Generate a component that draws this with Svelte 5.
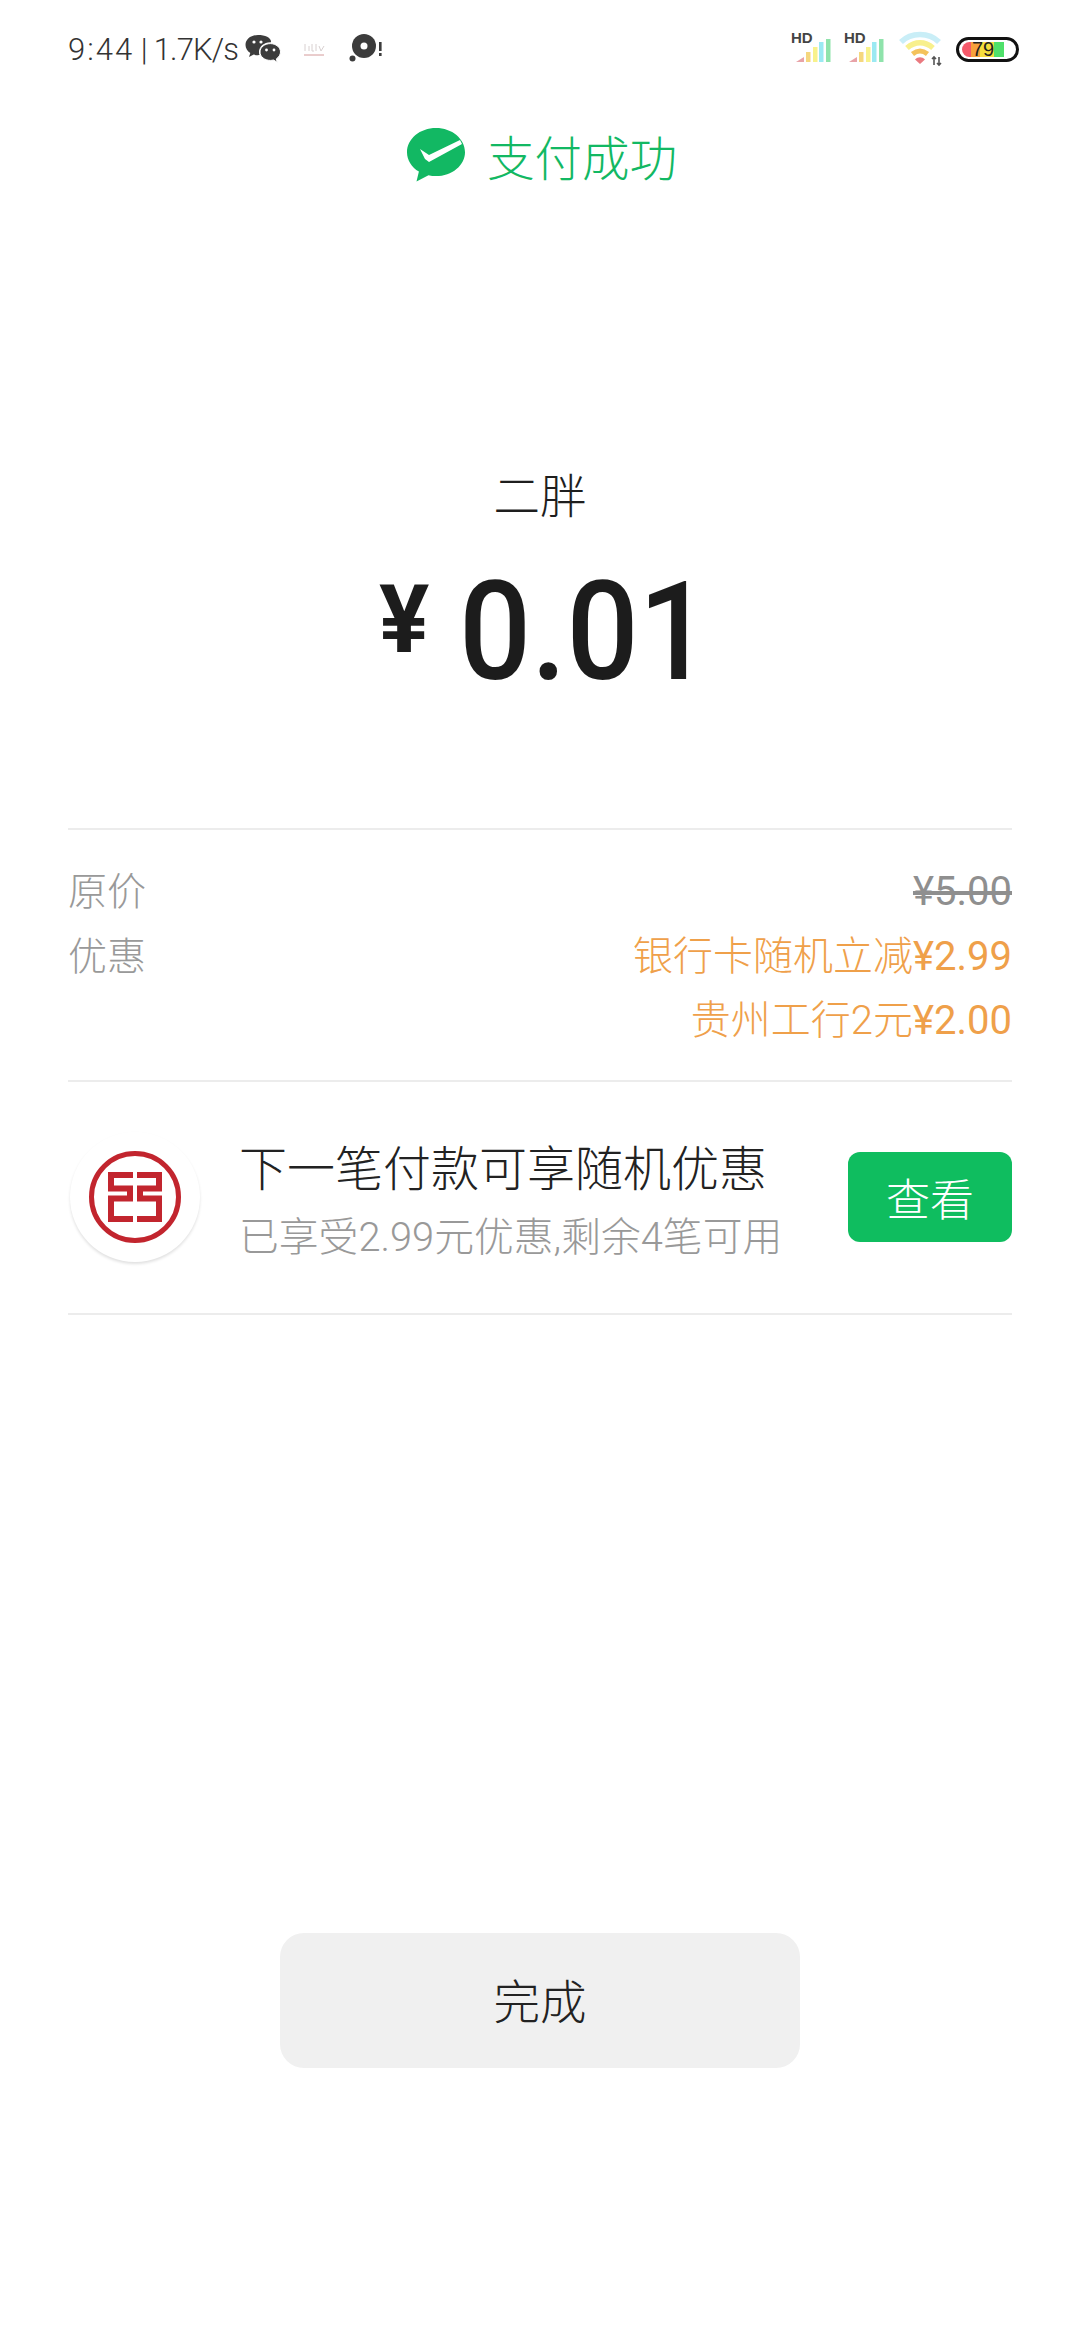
<script>
  const originalPrice = '¥5.00';
  const discounts = [
    { label: '银行卡随机立减', amount: '¥2.99' },
    { label: '贵州工行2元', amount: '¥2.00' }
  ];
  const signalBars = [
    { x: 13, h: 10, color: '#f5d77e' },
    { x: 20, h: 15, color: '#f8f28c' },
    { x: 26, h: 20, color: '#9be9f2' },
    { x: 33, h: 23, color: '#8fe3ab' }
  ];
</script>

<div class="page">
  <div class="status">
    <span class="clock"><span class="time">9:44</span> | 1.7K/s</span>
    <svg class="wechat" width="36" height="30" viewBox="0 0 36 30">
      <path d="M13 1C6 1 .5 5.400 .5 11c0 3.300 1.900 6.100 4.800 8l-1.300 4 4.700-2.400c1.400.4 2.800.6 4.300.6.500 0 1 0 1.500-.1-.4-1-.5-2-.5-3.100 0-5.400 5.100-9.700 11.200-9.700h.8C26.700 3.900 20.500 1 13 1z" fill="#3c3c3c"/>
      <path d="M35.500 18c0-4.700-4.600-8.400-10.200-8.400S15 13.300 15 18s4.600 8.400 10.300 8.400c1.100 0 2.200-.2 3.200-.4l3.800 2.300-1-3.400c2.500-1.700 4.200-4.300 4.200-6.900z" fill="#3c3c3c" stroke="#fff" stroke-width="1"/>
      <circle cx="9" cy="8" r="1.600" fill="#fff"/><circle cx="16" cy="8" r="1.600" fill="#fff"/>
      <circle cx="21.500" cy="16" r="1.400" fill="#fff"/><circle cx="29" cy="16" r="1.400" fill="#fff"/>
    </svg>
    <svg class="tiny" width="22" height="16" viewBox="0 0 22 16">
      <path d="M2 3v7M6 5v5M9 3v7h2M13 3v7M16 5l2 5 3-5" stroke="#d8d0d0" stroke-width="1" fill="none"/>
      <path d="M1 14h20" stroke="#d49a9a" stroke-width="1"/>
    </svg>
    <svg class="disc" width="34" height="30" viewBox="0 0 34 30">
      <circle cx="15" cy="12" r="12" fill="#3c3c3c"/>
      <circle cx="15" cy="12" r="3.500" fill="#fff"/>
      <circle cx="3.500" cy="24.500" r="3" fill="#3c3c3c"/>
      <rect x="30" y="8" width="2.600" height="9" fill="#3c3c3c"/>
      <rect x="30" y="19" width="2.600" height="3" fill="#3c3c3c"/>
    </svg>
    <span class="spacer"></span>
    <div class="sys">
      {#each [0, 1] as sim}
        <div class="sim" data-sim={sim}>
          <span class="hd">HD</span>
          <svg width="40" height="24" viewBox="0 0 40 24">
            <path d="M3 24l8-5v5z" fill="#e8a3a8"/>
            {#each signalBars as b}
              <rect x={b.x} y={24 - b.h} width="4.500" height={b.h} fill={b.color}/>
            {/each}
          </svg>
        </div>
      {/each}
      <svg class="wifi" width="44" height="36" viewBox="0 0 44 36">
        <path d="M2 11C12 1 30 1 40 11" fill="none" stroke="#c9eef7" stroke-width="5.500"/>
        <path d="M8 17c8-7 18-7 26 0" fill="none" stroke="#f8f08c" stroke-width="5.500"/>
        <path d="M13.500 23c5-4 10-4 15 0" fill="none" stroke="#f4c25c" stroke-width="5"/>
        <path d="M16 28.500c3-3 7-3 10 0l-5 4.500z" fill="#ea7a80"/>
        <path d="M35 26v8M33 28l2-2 2 2M40 26v8M38 32l2 2 2-2" stroke="#555" stroke-width="1.600" fill="none"/>
      </svg>
      <div class="battery">
        <div class="charge"><span class="level">79</span></div>
      </div>
    </div>
  </div>

  <div class="result">
    <svg width="58" height="54" viewBox="0 0 58 54">
      <path d="M29 0C13 0 0 10.800 0 24.200c0 8 4.700 15 11.900 19.400L9.500 53.500l12-6.300c2.400.6 4.900.9 7.500.9 16 0 29-10.800 29-23.900C58 10.800 45 0 29 0z" fill="#12b863"/>
      <path d="M13 21l9 6 31-15 2 4-33 18-4-3z" fill="#fff"/>
    </svg>
    <span>支付成功</span>
  </div>

  <div class="payee">二胖</div>
  <div class="amount"><span class="yen">¥</span><span class="num">0.01</span></div>

  <div class="details">
    <div class="line">
      <span class="key">原价</span>
      <s class="old">{originalPrice}</s>
    </div>
    <div class="line">
      <span class="key">优惠</span>
      <div class="offers">
        {#each discounts as d}
          <div class="offer">{d.label}<b>{d.amount}</b></div>
        {/each}
      </div>
    </div>
  </div>

  <div class="promo">
    <div class="logo">
      <svg width="94" height="94" viewBox="0 0 94 94">
        <circle cx="47" cy="47" r="43.500" fill="none" stroke="#c2252e" stroke-width="5"/>
        <g fill="none" stroke="#c2252e" stroke-width="6" transform="translate(20 22)">
          <path d="M25 3H3V16.500H22V26.500H3V47H25"/>
          <path d="M29 3H51V16.500H32V26.500H51V47H29"/>
        </g>
      </svg>
    </div>
    <div class="copy">
      <div class="title">下一笔付款可享随机优惠</div>
      <div class="sub">已享受2.99元优惠,剩余4笔可用</div>
    </div>
    <button class="view">查看</button>
  </div>

  <button class="done">完成</button>
</div>

<style>
  :global(body) {
    background: #fff;
    font-family: "Roboto", "Noto Sans CJK SC", sans-serif;
    font-weight: 300;
  }
  .page {
    height: 2340px;
    box-sizing: border-box;
    padding: 0 68px;
    display: flex;
    flex-direction: column;
    overflow: hidden;
  }
  .status {
    height: 98px;
    display: flex;
    align-items: center;
    color: #333;
  }
  .clock {
    font-size: 31px;
    font-weight: 300;
    letter-spacing: -0.8px;
    white-space: nowrap;
  }
  .time { letter-spacing: 2px; }
  .wechat { margin-left: 7px; }
  .tiny { margin-left: 22px; }
  .disc { margin-left: 24px; }
  .spacer { flex: 1; }
  .sys {
    display: flex;
    align-items: flex-end;
    gap: 13px;
    margin-right: -7px;
    height: 40px;
  }
  .sim {
    width: 40px;
    height: 36px;
    position: relative;
  }
  .sim svg { position: absolute; bottom: 7px; left: 0; }
  .hd {
    position: absolute;
    top: -4px;
    left: -2px;
    font: bold 15px "Liberation Sans", sans-serif;
    color: #444;
  }
  .wifi { margin-bottom: 2px; }
  .battery {
    box-sizing: border-box;
    width: 63px;
    height: 25px;
    margin-bottom: 7px;
    border: 3px solid #111;
    border-radius: 13px;
    padding: 2px 3px;
    overflow: hidden;
  }
  .charge {
    width: 42px;
    height: 100%;
    border-radius: 8px 0 0 8px;
    background: linear-gradient(90deg, #f5596a 0 22%, #f7a13c 22% 42%, #f5dd3e 42% 76%, #4fe06a 76%);
    display: flex;
    justify-content: center;
    align-items: center;
  }
  .level {
    font: 20px "Liberation Sans", sans-serif;
    color: #222;
  }
  .result {
    display: flex;
    align-items: center;
    justify-content: center;
    gap: 22px;
    margin-top: 28px;
    height: 58px;
    color: #12b863;
    font-size: 47.500px;
  }
  .result svg { margin-left: 4px; }
  .payee {
    margin-top: 283px;
    text-align: center;
    font-size: 46.500px;
    line-height: 60px;
    color: #1e1e1e;
  }
  .amount {
    margin-top: 30px;
    padding-left: 12px;
    display: flex;
    justify-content: center;
    align-items: baseline;
    color: #1c1c1c;
    line-height: 150px;
    height: 150px;
  }
  .yen {
    font-size: 94px;
    font-weight: 700;
    margin-right: 30px;
    position: relative;
    top: -27px;
  }
  .num {
    display: inline-block;
    font-size: 138px;
    font-weight: 500;
    transform: scaleX(0.92);
    transform-origin: left;
    margin-right: -20px;
  }
  .details {
    margin-top: 121px;
    padding: 30px 0 26px;
    border-top: 2px solid #ececec;
    border-bottom: 2px solid #ececec;
    font-size: 40px;
  }
  .line {
    display: flex;
    justify-content: space-between;
    line-height: 64.500px;
  }
  .key {
    color: #999;
    font-size: 39px;
  }
  .old {
    color: #8f8f8f;
    font-weight: 400;
  }
  .offers {
    text-align: right;
    color: #efa04a;
  }
  .offer b { font-weight: 400; }
  .promo {
    display: flex;
    align-items: center;
    height: 231px;
    border-bottom: 2px solid #ececec;
  }
  .logo {
    width: 130px;
    height: 130px;
    margin-left: 2px;
    border-radius: 50%;
    box-shadow: 0 2px 3px rgba(0, 0, 0, 0.12);
    display: flex;
    align-items: center;
    justify-content: center;
    flex: none;
  }
  .copy {
    margin-left: 39px;
    flex: 1;
    padding-top: 10px;
  }
  .title {
    font-size: 48px;
    line-height: 64px;
    color: #222;
  }
  .sub {
    font-size: 39.800px;
    line-height: 56px;
    color: #999;
    margin-top: 8px;
  }
  .view {
    width: 164px;
    height: 90px;
    border: 0;
    border-radius: 12px;
    background: #0fbd5f;
    color: #fff;
    font: inherit;
    font-size: 44px;
    padding: 0;
  }
  .done {
    width: 520px;
    height: 135px;
    margin: 618px auto 0;
    padding: 0 0 3px;
    border: 0;
    border-radius: 24px;
    background: #f0f0f0;
    color: #222;
    font: inherit;
    font-size: 46.500px;
  }
</style>
